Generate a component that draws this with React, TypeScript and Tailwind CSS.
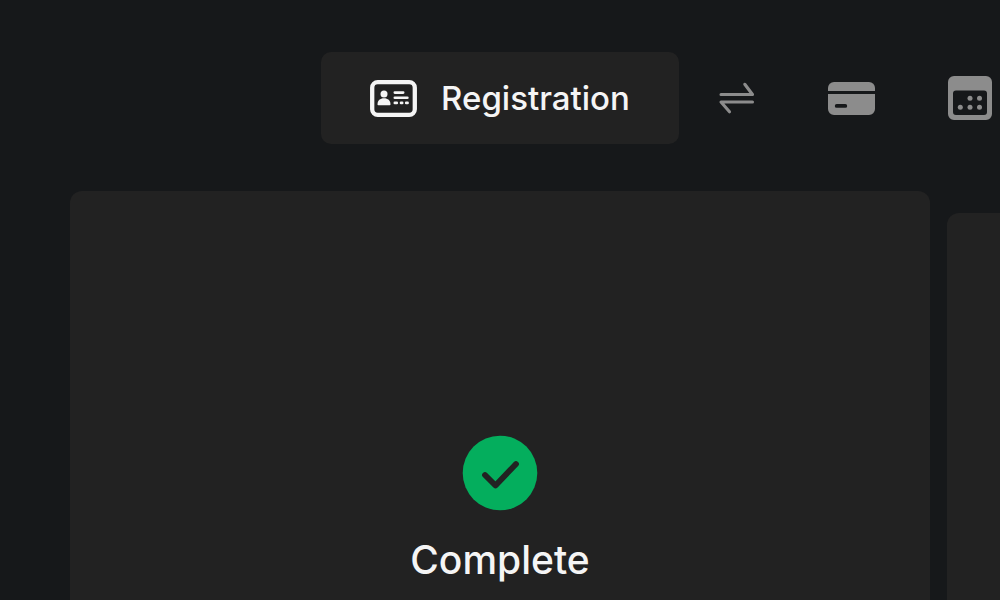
import type { ReactNode } from 'react'

function IdCardIcon() {
  return (
    <svg width="47" height="37" viewBox="0 0 47 37" fill="none" aria-hidden="true">
      <rect x="2.200" y="2.200" width="42.600" height="32.600" rx="5.500" stroke="currentColor" strokeWidth="4.300" />
      <g fill="currentColor">
        <circle cx="14" cy="14" r="3.500" />
        <path d="M7.500 24.500c0-4 2.600-6.200 6.500-6.200s6.500 2.200 6.500 6.200c0 .6-.3.8-.8.8H8.300c-.5 0-.8-.2-.8-.8Z" />
      </g>
      <g stroke="currentColor" strokeWidth="2.600" strokeLinecap="round">
        <path d="M24.800 12.600h8.400M24.800 17.700h12.600M24.800 22.900h2M31 22.900h1.200M36.200 22.900h1.400" />
      </g>
    </svg>
  )
}

function SwapIcon() {
  return (
    <svg width="36" height="32" viewBox="0 0 36 32" fill="none" aria-hidden="true">
      <path
        d="M2 12.500h31.500L25.800 2.300M33.500 20H2l8.500 9.800"
        stroke="currentColor"
        strokeWidth="3.100"
        strokeLinecap="round"
        strokeLinejoin="round"
      />
    </svg>
  )
}

function PaymentIcon() {
  return (
    <svg width="47" height="33" viewBox="0 0 47 33" fill="currentColor" aria-hidden="true">
      <path d="M0 9V6a6 6 0 0 1 6-6h35a6 6 0 0 1 6 6v3Z" />
      <path
        fillRule="evenodd"
        d="M0 12h47v15a6 6 0 0 1-6 6H6a6 6 0 0 1-6-6ZM8.700 22a1.900 1.900 0 0 0 0 3.800h8.600a1.900 1.900 0 0 0 0-3.800Z"
      />
    </svg>
  )
}

function CalendarIcon() {
  return (
    <svg width="44" height="44" viewBox="0 0 44 44" fill="currentColor" aria-hidden="true">
      <path
        fillRule="evenodd"
        d="M6 0h32a6 6 0 0 1 6 6v32a6 6 0 0 1-6 6H6a6 6 0 0 1-6-6V6a6 6 0 0 1 6-6ZM8 14.500a3 3 0 0 0-3 3v18.500a3 3 0 0 0 3 3h28a3 3 0 0 0 3-3V17.500a3 3 0 0 0-3-3Z"
      />
      <circle cx="22" cy="22.300" r="2.500" />
      <circle cx="31.500" cy="22.300" r="2.500" />
      <circle cx="12.300" cy="31.300" r="2.500" />
      <circle cx="22" cy="31.300" r="2.500" />
      <circle cx="31.500" cy="31.300" r="2.500" />
    </svg>
  )
}

function CompleteIcon() {
  return (
    <svg width="76" height="76" viewBox="0 0 76 76" fill="none" aria-hidden="true">
      <circle cx="38" cy="38" r="37.300" fill="#04ae5d" />
      <path
        d="M23 40 33.500 50.500 54 29"
        stroke="#222222"
        strokeWidth="5.800"
        strokeLinecap="round"
        strokeLinejoin="round"
      />
    </svg>
  )
}

const steps: { name: string; icon: ReactNode }[] = [
  { name: 'Transfer', icon: <SwapIcon /> },
  { name: 'Payment', icon: <PaymentIcon /> },
  { name: 'Calendar', icon: <CalendarIcon /> },
]

export default function App() {
  return (
    <div className="flex h-screen flex-col overflow-hidden bg-[#16181a] font-['Inter',sans-serif] font-medium text-[#f5f5f5]">
      <nav className="mt-[52px] grid shrink-0 grid-cols-[1fr_auto_1fr] items-center">
        <button
          type="button"
          className="col-start-2 flex h-[92px] items-center gap-6 rounded-[10px] bg-[#222222] px-[49px] text-[33px] leading-10"
        >
          <IdCardIcon />
          Registration
        </button>
        <div className="flex items-center gap-[73px] pl-10 text-[#8c8c8c]">
          {steps.map((step) => (
            <button key={step.name} type="button" aria-label={step.name} className="shrink-0">
              {step.icon}
            </button>
          ))}
        </div>
      </nav>

      <main className="mx-[7%] mt-[47px] flex flex-1 gap-[17px]">
        <section className="flex w-full shrink-0 flex-col items-center gap-[25px] rounded-t-xl bg-[#222222] pt-[244px]">
          <CompleteIcon />
          <h1 className="text-[39px] leading-[48px]">Complete</h1>
        </section>
        <section className="mt-[22px] w-full shrink-0 rounded-t-xl bg-[#222222]" />
      </main>
    </div>
  )
}
